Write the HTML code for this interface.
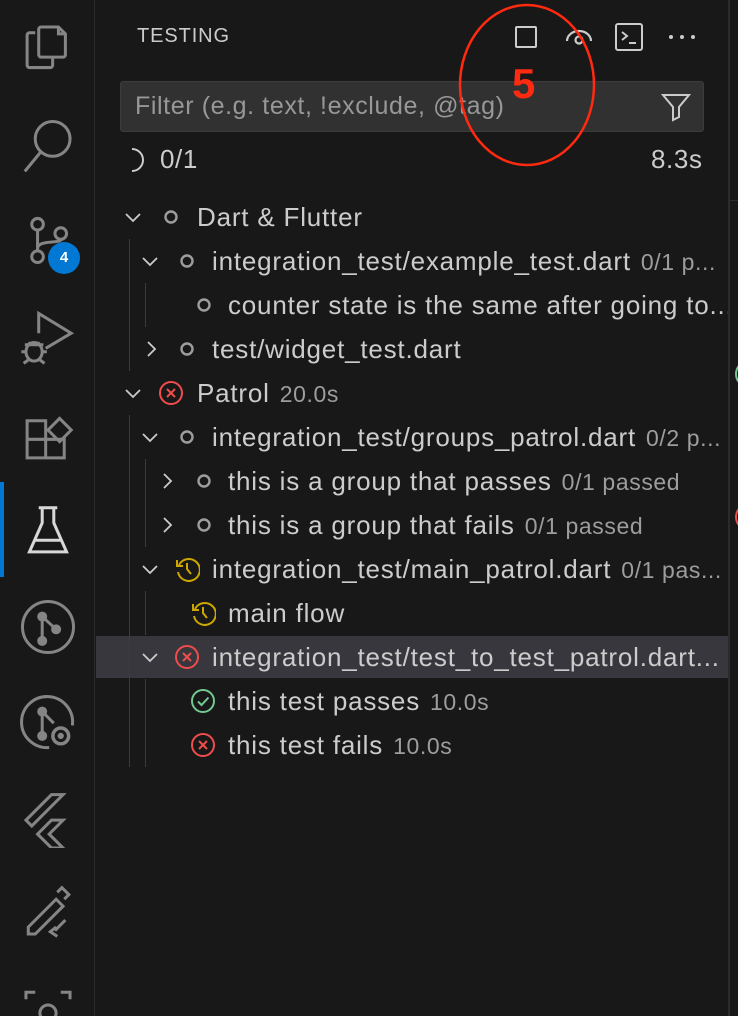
<!DOCTYPE html>
<html><head><meta charset="utf-8"><style>
*{margin:0;padding:0;box-sizing:border-box}
html,body{width:738px;height:1016px;overflow:hidden}
body{background:#181818;position:relative;font-family:"Liberation Sans",sans-serif;color:#cccccc}
.ab{position:absolute;left:0;top:0;width:95px;height:1016px;background:#181818;border-right:1px solid #2b2b2b}
.abi{position:absolute;left:19px;width:58px;height:58px}
.t{position:absolute;white-space:nowrap;font-size:26px;letter-spacing:0.8px;color:#cccccc;line-height:44px;height:44px;overflow:hidden}
.d{color:#9d9d9d;font-size:23px;letter-spacing:0.6px;margin-left:10px}
.ic{position:absolute}
.g{position:absolute;width:1px;background:#3c3c3c}
</style></head><body>
<div class="ab">
<svg class="abi" style="top:20px" viewBox="0 0 50 50" fill="none" stroke="#858585" stroke-width="2.6"><path d="M14 11h-5a2 2 0 0 0-2 2v26a2 2 0 0 0 2 2h18a2 2 0 0 0 2-2v-6"/><path d="M17 8v22a2 2 0 0 0 2 2h19a2 2 0 0 0 2-2V12l-6-6H19a2 2 0 0 0-2 2zM34 6v6h6"/></svg>
<svg class="abi" style="top:118px" viewBox="0 0 50 50" fill="none" stroke="#858585" stroke-width="2.6"><circle cx="29" cy="18" r="15"/><path d="M19 29L5 46"/></svg>
<svg class="abi" style="top:208px" viewBox="0 0 50 50" fill="none" stroke="#858585" stroke-width="2.6"><circle cx="16" cy="14" r="5"/><circle cx="16" cy="42" r="5"/><circle cx="36" cy="22" r="5"/><path d="M16 19v18M16 35c0-8 20-4 20-8"/></svg>
<div style="position:absolute;left:48px;top:242px;width:32px;height:32px;border-radius:50%;background:#0078d4;color:#fff;font-weight:bold;font-size:15px;text-align:center;line-height:32px">4</div>
<svg class="abi" style="top:310px" viewBox="0 0 50 50" fill="none" stroke="#858585" stroke-width="2.6"><path d="M17 20V3l28 17-22 13"/><ellipse cx="13" cy="36" rx="7" ry="8"/><path d="M5 30h16M2 36h4M20 36h4M4 46l4-3M22 46l-4-3M8 28l2 2M18 28l-2 2"/></svg>
<svg class="abi" style="top:408px" viewBox="0 0 50 50" fill="none" stroke="#858585" stroke-width="2.6"><path d="M7 11h16v32H7zM7 27h32v16H23M25 19l10-10 10 10-10 10z"/></svg>
<div style="position:absolute;left:0;top:482px;width:4px;height:95px;background:#0078d4"></div>
<svg class="abi" style="top:502px" viewBox="0 0 50 50" fill="none" stroke="#d8d8d8" stroke-width="2.6"><path d="M17 5h16M20 5v13L9 43h32L30 18V5M14 33h22"/></svg>
<svg class="abi" style="top:598px" viewBox="0 0 50 50" fill="none" stroke="#858585" stroke-width="2.6"><circle cx="25" cy="25" r="22"/><circle cx="20" cy="16" r="3" fill="#858585"/><circle cx="20" cy="37" r="3" fill="#858585"/><circle cx="32" cy="27" r="3" fill="#858585"/><path d="M20 16v21M20 16l12 11"/></svg>
<svg class="abi" style="top:693px" viewBox="0 0 50 50" fill="none" stroke="#858585" stroke-width="2.6"><path d="M46 28A22 22 0 1 0 26 47"/><circle cx="20" cy="16" r="3" fill="#858585"/><circle cx="20" cy="37" r="3" fill="#858585"/><path d="M20 16v21M20 16l10 10"/><circle cx="36" cy="37" r="7" fill="#858585"/><circle cx="36" cy="37" r="4" stroke="#181818"/></svg>
<svg class="abi" style="top:790px" viewBox="0 0 50 50" fill="none" stroke="#858585" stroke-width="2.6"><path d="M38 4H28L6 26l5 5L38 4zM38 26H28L16 38l12 12h10L26 38z"/></svg>
<svg class="abi" style="top:883px" viewBox="0 0 50 50" fill="none" stroke="#858585" stroke-width="2.6"><path d="M8 44v-6L32 14l6 6-24 24zM33 8l4-4 6 6-4 4M32 38l-5 4 6 4M40 32l-9 9"/></svg>
<svg class="abi" style="top:983px" viewBox="0 0 50 50" fill="none" stroke="#858585" stroke-width="2.6"><path d="M6 14V8h8M36 8h8v6M6 36v6h8"/><circle cx="25" cy="26" r="7"/></svg>
</div>
<div style="position:absolute;left:728px;top:0;width:2px;height:1016px;background:#2b2b2b"></div>
<div style="position:absolute;left:728px;top:200px;width:10px;height:1px;background:#2b2b2b"></div>
<div style="position:absolute;left:735px;top:362px;width:20px;height:24px;border:2px solid #73c991;border-radius:50%"></div>
<div style="position:absolute;left:735px;top:505px;width:20px;height:24px;border:2px solid #f14c4c;border-radius:50%"></div>

<div style="position:absolute;left:137px;top:25px;font-size:20px;letter-spacing:0.9px;color:#cccccc">TESTING</div>
<div style="position:absolute;left:515px;top:26px;width:22px;height:22px;border:2px solid #cccccc;border-radius:2px"></div>
<svg style="position:absolute;left:564px;top:26px" width="30" height="22" viewBox="0 0 30 22" fill="none" stroke="#cccccc" stroke-width="2.2"><path d="M3 15a12 10 0 0 1 24 0"/><circle cx="15" cy="14" r="3.5"/></svg>
<svg style="position:absolute;left:614px;top:22px" width="30" height="30" viewBox="0 0 30 30" fill="none" stroke="#cccccc" stroke-width="2"><rect x="2" y="2" width="26" height="26" rx="2"/><path d="M8 10l5 4-5 4M15 21h7"/></svg>
<svg style="position:absolute;left:668px;top:34px" width="30" height="6"><circle cx="3" cy="3" r="2" fill="#cccccc"/><circle cx="14" cy="3" r="2" fill="#cccccc"/><circle cx="25" cy="3" r="2" fill="#cccccc"/></svg>

<div style="position:absolute;left:120px;top:81px;width:584px;height:51px;background:#313131;border:1px solid #3c3c3c;border-radius:3px"></div>
<div style="position:absolute;left:135px;top:92px;font-size:25px;letter-spacing:0.6px;color:#989898">Filter (e.g. text, !exclude, @tag)</div>
<svg style="position:absolute;left:660px;top:92px" width="32" height="30" viewBox="0 0 32 30" fill="none" stroke="#cccccc" stroke-width="2"><path d="M3 3h26L19 15v10l-6 3V15z"/></svg>

<svg style="position:absolute;left:458px;top:3px" width="142" height="164" viewBox="0 0 142 164"><ellipse cx="69" cy="82" rx="67" ry="80" fill="none" stroke="#ff2a10" stroke-width="2.5"/></svg>
<div style="position:absolute;left:512px;top:63px;font-size:42px;font-weight:bold;color:#ff2a10;line-height:1">5</div>

<svg style="position:absolute;left:128px;top:147px" width="16" height="26" viewBox="0 0 16 26" fill="none" stroke="#cccccc" stroke-width="2"><path d="M4 2a11 11 0 0 1 0 22"/></svg>
<div style="position:absolute;left:160px;top:144px;font-size:26px;letter-spacing:0.6px">0/1</div>
<div style="position:absolute;left:651px;top:144px;font-size:26px;letter-spacing:0.6px">8.3s</div>

<div style="position:absolute;left:96px;top:636px;width:632px;height:42px;background:#37373d"></div>
<div class="g" style="left:129px;top:239px;height:132px"></div>
<div class="g" style="left:145px;top:283px;height:44px"></div>
<div class="g" style="left:129px;top:415px;height:352px"></div>
<div class="g" style="left:145px;top:459px;height:88px"></div>
<div class="g" style="left:145px;top:591px;height:44px"></div>
<div class="g" style="left:145px;top:679px;height:88px"></div>

<svg width="0" height="0" style="position:absolute">
<defs>
<symbol id="dn" viewBox="0 0 20 20"><path d="M3 7l7 7 7-7" fill="none" stroke="#cccccc" stroke-width="1.8"/></symbol>
<symbol id="rt" viewBox="0 0 20 20"><path d="M7 3l7 7-7 7" fill="none" stroke="#cccccc" stroke-width="1.8"/></symbol>
<symbol id="o" viewBox="0 0 20 20"><circle cx="10" cy="10" r="5.5" fill="none" stroke="#9d9d9d" stroke-width="2.4"/></symbol>
<symbol id="x" viewBox="0 0 26 26"><circle cx="13" cy="13" r="11" fill="none" stroke="#f14c4c" stroke-width="2"/><path d="M9 9l8 8M17 9l-8 8" stroke="#f14c4c" stroke-width="2"/></symbol>
<symbol id="ok" viewBox="0 0 26 26"><circle cx="13" cy="13" r="11" fill="none" stroke="#73c991" stroke-width="2"/><path d="M8 13.5l3.5 3.5 7-7.5" fill="none" stroke="#73c991" stroke-width="2"/></symbol>
<symbol id="cl" viewBox="0 0 26 26"><path d="M5 9A11 11 0 1 1 4 16" fill="none" stroke="#cca700" stroke-width="2"/><path d="M3 4v6h6" fill="none" stroke="#cca700" stroke-width="2"/><path d="M13 7v6l4 5" fill="none" stroke="#cca700" stroke-width="2"/></symbol>
</defs></svg>

<svg class="ic" style="left:123px;top:207px" width="20" height="20"><use href="#dn"/></svg>
<svg class="ic" style="left:161px;top:207px" width="20" height="20"><use href="#o"/></svg>
<div class="t" style="left:197px;top:195px;width:531px">Dart &amp; Flutter</div>

<svg class="ic" style="left:140px;top:251px" width="20" height="20"><use href="#dn"/></svg>
<svg class="ic" style="left:177px;top:251px" width="20" height="20"><use href="#o"/></svg>
<div class="t" style="left:212px;top:239px;width:516px">integration_test/example_test.dart<span class="d">0/1 p...</span></div>

<svg class="ic" style="left:194px;top:295px" width="20" height="20"><use href="#o"/></svg>
<div class="t" style="left:228px;top:283px;width:500px">counter state is the same after going to...</div>

<svg class="ic" style="left:141px;top:339px" width="20" height="20"><use href="#rt"/></svg>
<svg class="ic" style="left:177px;top:339px" width="20" height="20"><use href="#o"/></svg>
<div class="t" style="left:212px;top:327px;width:516px">test/widget_test.dart</div>

<svg class="ic" style="left:123px;top:383px" width="20" height="20"><use href="#dn"/></svg>
<svg class="ic" style="left:158px;top:380px" width="26" height="26"><use href="#x"/></svg>
<div class="t" style="left:197px;top:371px;width:531px">Patrol<span class="d">20.0s</span></div>

<svg class="ic" style="left:140px;top:427px" width="20" height="20"><use href="#dn"/></svg>
<svg class="ic" style="left:177px;top:427px" width="20" height="20"><use href="#o"/></svg>
<div class="t" style="left:212px;top:415px;width:516px">integration_test/groups_patrol.dart<span class="d">0/2 p...</span></div>

<svg class="ic" style="left:157px;top:471px" width="20" height="20"><use href="#rt"/></svg>
<svg class="ic" style="left:194px;top:471px" width="20" height="20"><use href="#o"/></svg>
<div class="t" style="left:228px;top:459px;width:500px">this is a group that passes<span class="d">0/1 passed</span></div>

<svg class="ic" style="left:157px;top:515px" width="20" height="20"><use href="#rt"/></svg>
<svg class="ic" style="left:194px;top:515px" width="20" height="20"><use href="#o"/></svg>
<div class="t" style="left:228px;top:503px;width:500px">this is a group that fails<span class="d">0/1 passed</span></div>

<svg class="ic" style="left:140px;top:559px" width="20" height="20"><use href="#dn"/></svg>
<svg class="ic" style="left:174px;top:556px" width="26" height="26"><use href="#cl"/></svg>
<div class="t" style="left:212px;top:547px;width:516px">integration_test/main_patrol.dart<span class="d">0/1 pas...</span></div>

<svg class="ic" style="left:190px;top:600px" width="26" height="26"><use href="#cl"/></svg>
<div class="t" style="left:228px;top:591px;width:500px">main flow</div>

<svg class="ic" style="left:140px;top:647px" width="20" height="20"><use href="#dn"/></svg>
<svg class="ic" style="left:174px;top:644px" width="26" height="26"><use href="#x"/></svg>
<div class="t" style="left:212px;top:635px;width:516px">integration_test/test_to_test_patrol.dart...</div>

<svg class="ic" style="left:190px;top:688px" width="26" height="26"><use href="#ok"/></svg>
<div class="t" style="left:228px;top:679px;width:500px">this test passes<span class="d">10.0s</span></div>

<svg class="ic" style="left:190px;top:732px" width="26" height="26"><use href="#x"/></svg>
<div class="t" style="left:228px;top:723px;width:500px">this test fails<span class="d">10.0s</span></div>
</body></html>
